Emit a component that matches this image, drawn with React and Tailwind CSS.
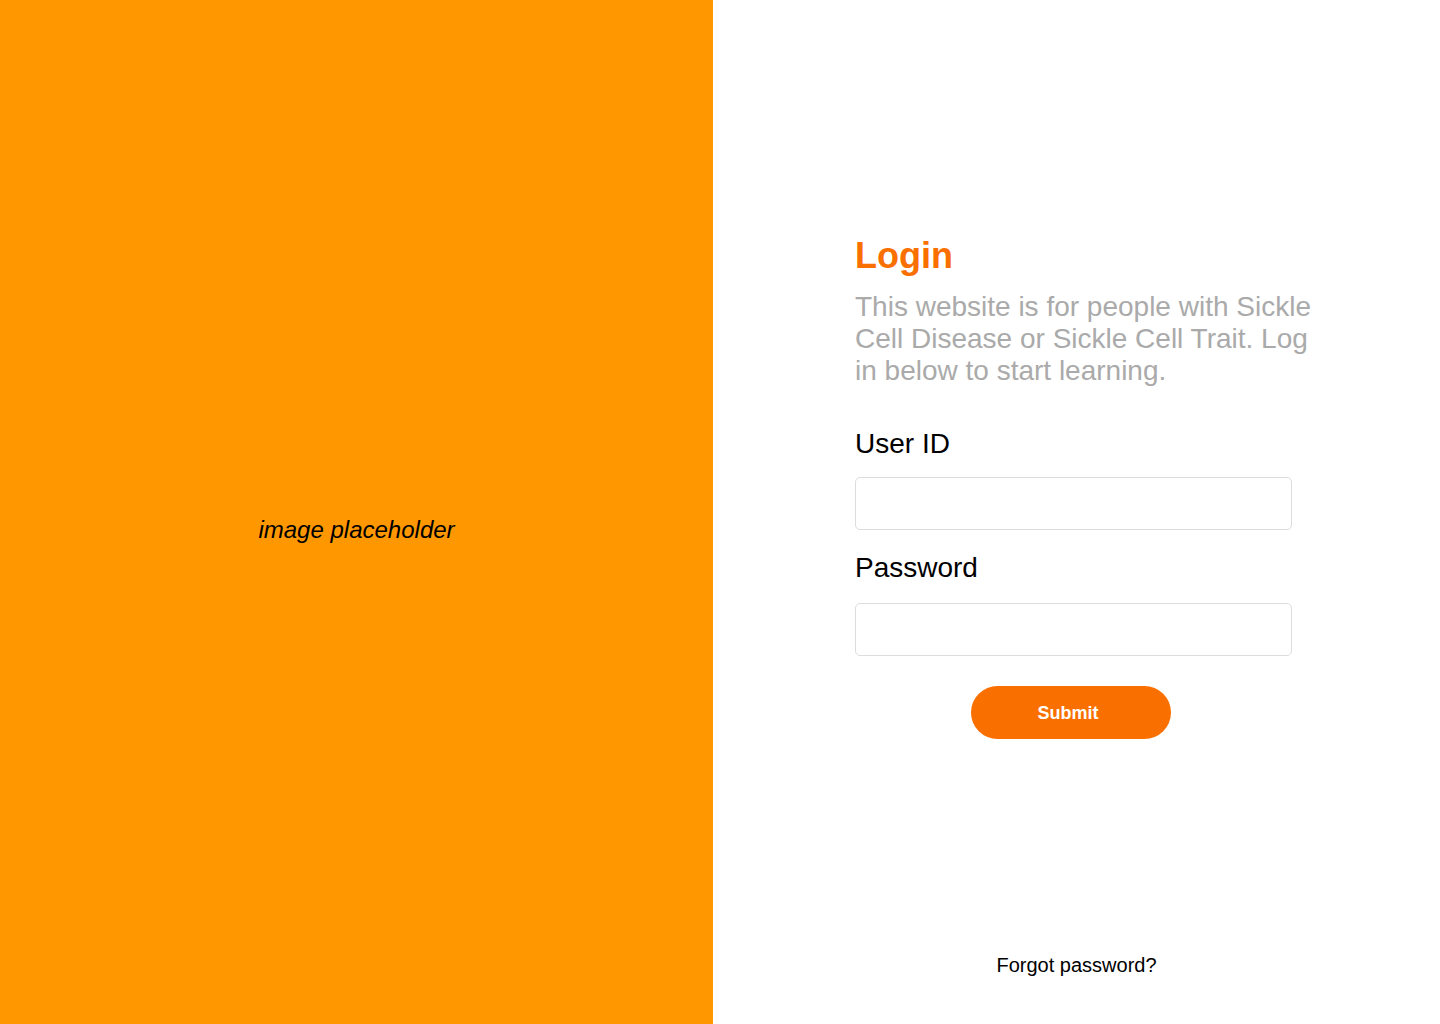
export default function App() {
  return (
    <div className="flex h-[1024px] w-[1440px]" style={{ fontFamily: '"Liberation Sans", Arial, sans-serif' }}>
      <div className="flex w-[713px] shrink-0 items-center justify-center bg-[#ff9800] pt-[36px]">
        <span className="text-[24px] italic text-black">image placeholder</span>
      </div>
      <div className="flex flex-1 flex-col bg-white">
        <div className="flex flex-col pl-[142px] pt-[236px]">
          <h1 className="text-[36px] font-bold leading-[40px] text-[#f97000]">Login</h1>
          <p className="mt-[15px] w-[470px] text-[28px] leading-[32px] text-[#aaaaaa]">
            This website is for people with Sickle Cell Disease or Sickle Cell Trait. Log in below to start learning.
          </p>
          <label className="mt-[41px] text-[28px] leading-[32px] text-black">User ID</label>
          <input type="text" className="mt-[17px] h-[53px] w-[437px] rounded-[5px] border border-[#dddddd] bg-white" />
          <label className="mt-[22px] text-[28px] leading-[32px] text-black">Password</label>
          <input type="password" className="mt-[19px] h-[53px] w-[437px] rounded-[5px] border border-[#dddddd] bg-white" />
          <button className="ml-[116px] mt-[30px] h-[53px] w-[200px] rounded-full bg-[#f97000] pr-[6px] pt-[2px] text-[18px] font-bold text-white">
            Submit
          </button>
        </div>
        <div className="mt-auto flex justify-center pb-[47px]">
          <a className="text-[20px] leading-[24px] text-black">Forgot password?</a>
        </div>
      </div>
    </div>
  );
}
